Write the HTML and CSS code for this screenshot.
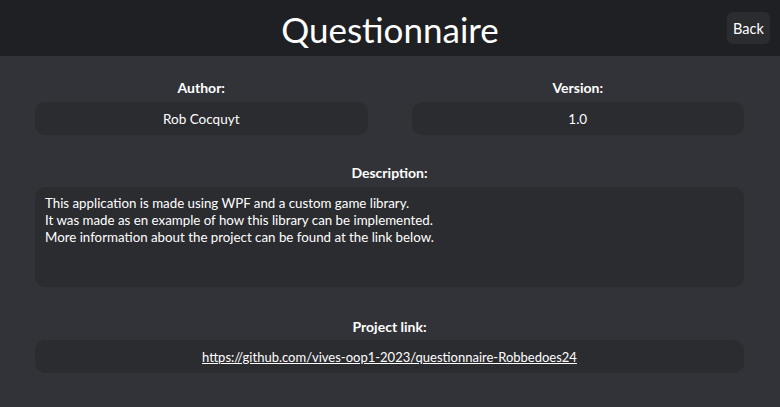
FILE: index.html
```html
<!DOCTYPE html>
<html lang="en">
<head>
<meta charset="utf-8">
<title>Questionnaire</title>
<link rel="stylesheet" href="styles.css">
</head>
<body>
<header class="topbar">
  <div class="topbar-spacer"></div>
  <h1 class="title">Questionnaire</h1>
  <button class="back-btn" type="button">Back</button>
</header>
<main class="content">
  <section class="row-two">
    <div class="field">
      <div class="field-label">Author:</div>
      <div class="field-box">Rob Cocquyt</div>
    </div>
    <div class="field">
      <div class="field-label">Version:</div>
      <div class="field-box">1.0</div>
    </div>
  </section>
  <section class="field field-desc">
    <div class="field-label">Description:</div>
    <div class="field-box desc-box">This application is made using WPF and a custom game library.<br>It was made as en example of how this library can be implemented.<br>More information about the project can be found at the link below.</div>
  </section>
  <section class="field field-link">
    <div class="field-label">Project link:</div>
    <div class="field-box link-box"><a class="project-link" href="#">https://github.com/vives-oop1-2023/questionnaire-Robbedoes24</a></div>
  </section>
</main>
</body>
</html>
```

FILE: styles.css
```css
html, body {
  margin: 0;
  padding: 0;
}
body {
  width: 780px;
  height: 407px;
  overflow: hidden;
  background: #323338;
  color: #ffffff;
  font-family: Lato, "Open Sans", sans-serif;
}
.topbar {
  height: 56px;
  background: #1f2023;
  display: grid;
  grid-template-columns: 1fr auto 1fr;
  align-items: center;
}
.title {
  margin: 0;
  font-weight: 400;
  font-size: 35px;
  line-height: 40px;
  color: #ffffff;
  padding-top: 2px;
}
.back-btn {
  justify-self: end;
  margin-right: 10px;
  width: 43px;
  height: 32px;
  border: none;
  border-radius: 6px;
  background: #2b2c30;
  color: #ffffff;
  font-family: Lato, "Open Sans", sans-serif;
  font-size: 14.5px;
  padding: 0;
}
.content {
  padding: 0 36px 0 35px;
  display: flex;
  flex-direction: column;
}
.row-two {
  display: grid;
  grid-template-columns: 1fr 1fr;
  column-gap: 44px;
  padding-top: 22px;
}
.field {
  display: flex;
  flex-direction: column;
}
.field-label {
  text-align: center;
  font-weight: 700;
  font-size: 14px;
  line-height: 20px;
  margin-bottom: 4px;
}
.field-box {
  background: #2b2c30;
  border-radius: 10px;
  height: 33px;
  display: flex;
  align-items: center;
  justify-content: center;
  font-size: 13.5px;
}
.field-desc {
  margin-top: 28px;
}
.desc-box {
  display: block;
  height: 100px;
  box-sizing: border-box;
  padding: 8px 10px;
  line-height: 17px;
  font-size: 13.3px;
}
.field-link {
  margin-top: 30px;
}
.field-link .field-label {
  margin-bottom: 3px;
}
.link-box {
  font-size: 13px;
}
.project-link {
  color: #ffffff;
  text-decoration: underline;
}
```
